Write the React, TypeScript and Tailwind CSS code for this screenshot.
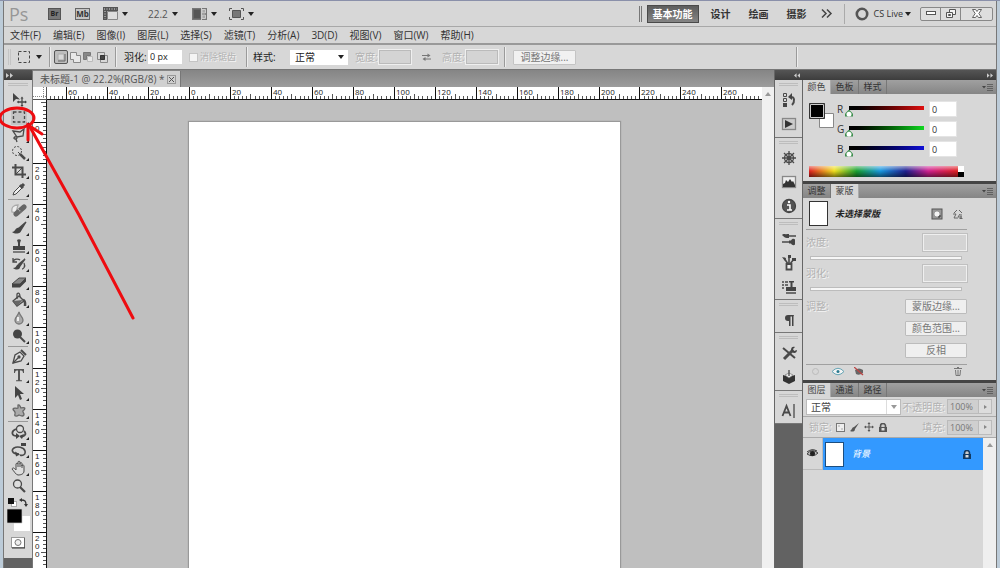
import { useEffect, useRef, useState } from "react";
import type { ReactNode, RefObject } from "react";

const FONT = "font-['Open_Sans','Noto_Sans_CJK_SC',sans-serif]";
const EMBOSS = "text-[#b2b2b2] [text-shadow:1px_1px_0_#f4f4f4]";

function Caret({ color = "#222" }: { color?: string }) {
  return (
    <svg width="6" height="4" viewBox="0 0 6 4" className="shrink-0">
      <path d="M0 0h6L3 4z" fill={color} />
    </svg>
  );
}

function Sep() {
  return <span className="box-content block h-5 w-px shrink-0 border-r border-[#ededed] bg-[#9a9a9a]" />;
}

function Icon({ children, size = 16 }: { children: ReactNode; size?: number }) {
  return (
    <svg width={size} height={size} viewBox="0 0 16 16" fill="none" stroke="#4a4a4a" strokeWidth="1.3" className="shrink-0">
      {children}
    </svg>
  );
}

/* ---------- application bar ---------- */

function AppBar() {
  return (
    <header className="flex h-[26px] shrink-0 items-center border-b border-[#a8a8a8] bg-[#d7d7d7] pl-[5px] pr-[3px] text-[10px]">
      <span className="w-[39px] text-[18px] leading-6 text-[#969696] font-['Open_Sans',sans-serif]">Ps</span>
      <button aria-label="Bridge" className="flex h-3 w-[13px] items-center justify-center border border-[#555] bg-[#777] text-[7px] leading-none font-bold text-[#222]">Br</button>
      <button aria-label="Mini Bridge" className="ml-[14px] flex h-3 w-[15px] items-center justify-center border border-[#666] bg-[#c4c4c4] text-[8px] leading-none font-bold text-[#333]">Mb</button>
      <button aria-label="查看额外内容" className="ml-[13px] flex items-center gap-1">
        <svg width="15" height="13" viewBox="0 0 15 13">
          <path d="M0 0h15v4H4v9H0z" fill="#555" />
          <path d="M4.500 4.500h10v8h-10z" fill="#dedede" stroke="#888" />
          <path d="M1 2h13M2 4v8" stroke="#ddd" strokeDasharray="1 1.500" />
        </svg>
        <Caret />
      </button>
      <button className="ml-5 flex w-[30px] items-center justify-between text-[10px] text-[#555]">22.2<Caret /></button>
      <button aria-label="排列文档" className="ml-[14px] flex items-center gap-1">
        <svg width="15" height="12" viewBox="0 0 15 12">
          <path d="M0 0h15v12H0z" fill="#777" />
          <path d="M1.500 1.500h7v9h-7z" fill="#555" stroke="#666" />
          <path d="M10 1.500h3.500v3.500H10zM10 7h3.500v3.500H10z" fill="#aaa" stroke="#ccc" />
          <path d="M9.500 0v12" stroke="#ccc" />
        </svg>
        <Caret />
      </button>
      <button aria-label="屏幕模式" className="ml-3 flex items-center gap-1">
        <svg width="15" height="12" viewBox="0 0 15 12" stroke="#555" fill="none">
          <path d="M.5 3V.5H3M12 .5h2.500V3M14.500 9v2.500H12M3 11.500H.500V9" />
          <path d="M3.500 2.500h8v7h-8z" fill="#777" />
        </svg>
        <Caret />
      </button>
      <div className="ml-auto flex items-center text-[#333]">
        <span className="h-4 w-[3px] border-x border-[#777]" />
        <button className="ml-[5px] h-[18px] w-[52px] border border-[#4a4a4a] bg-linear-to-b from-[#5d5d5d] to-[#848484] text-[10px] leading-4 font-bold text-white">基本功能</button>
        <button className="ml-3 font-bold">设计</button>
        <button className="ml-[18px] font-bold">绘画</button>
        <button className="ml-[18px] font-bold">摄影</button>
        <button aria-label="更多工作区" className="ml-[14px]">
          <svg width="12" height="9" viewBox="0 0 12 9" fill="none" stroke="#444" strokeWidth="1.500"><path d="M1 .5l4 4-4 4M6 .5l4 4-4 4" /></svg>
        </button>
        <span className="mr-[10px] ml-[11px] h-5 w-px bg-[#aaa]" />
        <button className="flex items-center text-[9px]">
          <svg width="14" height="14" viewBox="0 0 14 14" className="mr-[5px]"><circle cx="7" cy="7" r="5.200" fill="#d7d7d7" stroke="#555" strokeWidth="2.600" /></svg>
          <span className="mr-[2px]">CS Live</span><Caret />
        </button>
        <div className="ml-[9px] flex h-[14px] w-[73px] rounded-[2px] border border-[#888] bg-[#dedede]">
          <button aria-label="最小化" className="flex w-5 items-center justify-center border-r border-[#888]">
            <svg width="10" height="5" viewBox="0 0 10 5"><rect x=".5" y=".5" width="9" height="3" fill="#fff" stroke="#555" /></svg>
          </button>
          <button aria-label="还原" className="flex w-5 items-center justify-center border-r border-[#888]">
            <svg width="10" height="9" viewBox="0 0 10 9" fill="#f3f3f3" stroke="#555"><path d="M3.500.5h6v5h-6z" /><path d="M.5 3.500h6v5h-6z" /><path d="M2.500 5.500h2v1h-2z" /></svg>
          </button>
          <button aria-label="关闭" className="flex flex-1 items-center justify-center">
            <svg width="10" height="9" viewBox="0 0 10 9" fill="#fff" stroke="#555" strokeWidth=".9"><path d="M.5.5h3L5 2.500 6.500.5h3L6.800 4.500l2.700 4h-3L5 6.500 3.500 8.500h-3l2.700-4z" /></svg>
          </button>
        </div>
      </div>
    </header>
  );
}

const MENUS = ["文件(F)", "编辑(E)", "图像(I)", "图层(L)", "选择(S)", "滤镜(T)", "分析(A)", "3D(D)", "视图(V)", "窗口(W)", "帮助(H)"];

function MenuBar() {
  return (
    <nav className="flex h-[18px] shrink-0 items-center gap-[12px] border-b-2 border-[#999] bg-[#d7d7d7] pl-[6px] text-[10px] text-[#333]">
      {MENUS.map((m) => <button key={m} className="whitespace-nowrap">{m}</button>)}
    </nav>
  );
}

/* ---------- options bar ---------- */

function OptionsBar() {
  return (
    <section className="flex h-6 shrink-0 items-center bg-[#d7d7d7] pl-1 text-[10px] text-[#222]">
      <span className="h-4 w-[3px] border-x border-[#c4c4c4]" />
      <button aria-label="矩形选框工具" className="ml-[7px] flex w-6 items-center justify-between">
        <svg width="12" height="12" viewBox="0 0 12 12"><rect x=".5" y=".5" width="11" height="11" fill="none" stroke="#444" strokeDasharray="3 2" /></svg>
        <Caret />
      </button>
      <span className="ml-[7px]"><Sep /></span>
      <span className="flex h-5 items-center pl-[3px]">
        <button aria-label="新选区" className="flex size-[14px] items-center justify-center rounded-[2px] border border-[#555] bg-[#bdbdbd]">
          <svg width="9" height="9" viewBox="0 0 9 9"><path d="M1 1h6v6H1z" fill="#d8d8d8" stroke="#aaa" /><path d="M8 1v7H1" stroke="#666" fill="none" /></svg>
        </button>
        <button aria-label="添加到选区" className="ml-[2px]">
          <svg width="11" height="11" viewBox="0 0 11 11" stroke="#888"><path d="M.5.500h6v3h4v7h-7v-3h-3z" fill="#e8e8e8" /></svg>
        </button>
        <button aria-label="从选区减去" className="ml-[2px]">
          <svg width="11" height="11" viewBox="0 0 11 11"><path d="M.5.5h7v3h-4v4h-3z" fill="#888" stroke="#777" /><path d="M4.500 4.500h5v5h-5z" fill="#e8e8e8" stroke="#bbb" /></svg>
        </button>
        <button aria-label="与选区交叉" className="ml-[3px]">
          <svg width="11" height="11" viewBox="0 0 11 11" fill="none" stroke="#888"><path d="M.5.5h7v7h-7zM3.500 3.500h7v7h-7z" /><path d="M3.500 3.500h4v4h-4z" fill="#444" stroke="#333" /></svg>
        </button>
      </span>
      <span className="mx-[7px]"><Sep /></span>
      <label htmlFor="feather" className="w-6">羽化:</label>
      <input id="feather" defaultValue="0 px" className="h-[14px] w-[34px] bg-white px-[2px] text-[9px]" />
      <label className={`ml-[7px] flex items-center ${EMBOSS}`}>
        <input type="checkbox" className="mr-[2px] size-[9px] appearance-none border border-[#c4c4c4] bg-[#f4f4f4]" />
        <span className="w-[38px] text-[9px]">消除锯齿</span>
      </label>
      <span className="ml-[8px] mr-[5px]"><Sep /></span>
      <label htmlFor="style" className="w-[37px]">样式:</label>
      <span className="flex h-[15px] w-[58px] items-center bg-white pr-1">
        <select id="style" className="w-full appearance-none bg-transparent pl-[5px] text-[10px] leading-[14px]"><option>正常</option></select>
        <Caret />
      </span>
      <label htmlFor="w" className={`ml-[7px] w-6 ${EMBOSS}`}>宽度:</label>
      <input id="w" disabled className="h-[14px] w-8 border border-[#bbb] bg-[#d4d4d4] outline outline-[#efefef]" />
      <button aria-label="交换宽高" className="ml-[11px]">
        <svg width="9" height="8" viewBox="0 0 9 8" stroke="#777" fill="#777"><path d="M0 2.500h6M3 6h6" /><path d="M5.500.500l3 2-3 2zM3.500 4l-3 2 3 2z" stroke="none" /></svg>
      </button>
      <label htmlFor="h" className={`ml-[11px] w-6 ${EMBOSS}`}>高度:</label>
      <input id="h" disabled className="h-[14px] w-8 border border-[#bbb] bg-[#d4d4d4] outline outline-[#efefef]" />
      <span className="ml-[6px] mr-[7px]"><Sep /></span>
      <button className="h-[15px] w-[63px] rounded-[1px] border border-[#c4c4c4] bg-[#f1f1f1] text-[10px] leading-[13px] text-[#777]">调整边缘...</button>
      <span className="ml-auto mr-[198px]"><Sep /></span>
    </section>
  );
}

/* ---------- toolbox ---------- */

const TOOLS: { name: string; art: ReactNode; flyout?: boolean }[][] = [
  [
    { name: "移动", art: <><path d="M2 2v9l3-3 4 .5z" fill="#444" stroke="none" /><path d="M11 7v8M7 11h8" /><path d="M11 5.500l-1.500 2h3zM11 16l-1.500-2h3zM5.700 11l2-1.500v3zM16 11l-2-1.500v3z" fill="#444" stroke="none" /></> },
    { name: "矩形选框", flyout: true, art: <><rect x="0" y="0" width="16" height="16" fill="#c4c4c4" stroke="none" /><rect x="2.500" y="3" width="11" height="10" strokeDasharray="3 2" /></> },
    { name: "套索", flyout: true, art: <path d="M2 4l7 1 4-3-1 7-6 1-4-6zM6 10c-3-1-4 2-2 2s3-1 1-3M5 12l1 3" /> },
    { name: "快速选择", flyout: true, art: <><circle cx="6" cy="6" r="4.500" strokeDasharray="2 1.500" strokeWidth="1" /><path d="M7 7l2 2" strokeWidth="1" /><path d="M9 9l5 5" strokeWidth="2.500" /></> },
    { name: "裁剪", flyout: true, art: <><path d="M4.500 1v10.500H15M1 4.500h10.500V15" strokeWidth="2" /><path d="M5 11l7-7" strokeWidth="1" /></> },
    { name: "吸管", flyout: true, art: <><path d="M2 14l1-3 6-6 2 2-6 6z" fill="#eee" strokeWidth="1" /><path d="M9 4l3 3M10.500 5.500l2.500-2.500" strokeWidth="3" /></> },
  ],
  [
    { name: "修复画笔", flyout: true, art: <><path d="M1 10c-1-5 2-7 6-7l-2 8z" fill="#eee" stroke="#aaa" /><path d="M5 12l8-7" strokeWidth="5" stroke="#666" strokeLinecap="round" /><path d="M7 7l3 3" stroke="#bbb" strokeDasharray="1 1" /></> },
    { name: "画笔", flyout: true, art: <><path d="M15 2L8 8l2 2z" fill="#444" /><path d="M8 8C4 7 5 12 1 12c4 3 10 1 9-2z" fill="#444" stroke="none" /></> },
    { name: "仿制图章", flyout: true, art: <><path d="M6 2q2-1.500 4 0l-1 3v3h5v4H2V8h5V5z" fill="#444" stroke="none" /><path d="M2 14h12" /></> },
    { name: "历史记录画笔", flyout: true, art: <><path d="M14 3L8 8l1 2z" fill="#444" /><path d="M8 8c-3 0-2 4-6 4 4 3 8 1 7-2z" fill="#444" stroke="none" /><path d="M2 6c1-4 6-3 7-2M2 2v4h4" /><path d="M13 7c2 4-1 6-2 6" /></> },
    { name: "橡皮擦", flyout: true, art: <><path d="M1 10l7-6h7l-6 6z" fill="#888" strokeWidth="1" /><path d="M1 10h8v3.500H1zM9 13.500l6-6V4l-6 6z" fill="#444" stroke="none" /></> },
    { name: "油漆桶", flyout: true, art: <><path d="M2 9l6-5 5 5-7 5z" fill="#ccc" /><path d="M2 9l10-1-6 6z" fill="#666" stroke="none" /><path d="M6 7V2c2-2 3 0 3 3" /><path d="M12 8c3 1 2 5 2 6" strokeWidth="2.500" /></> },
    { name: "模糊", flyout: true, art: <><path d="M8 2c1 4 4 5 4 8a4 4 0 01-8 0c0-3 3-4 4-8z" fill="#aaa" stroke="#777" /><path d="M7 7v4" stroke="#eee" strokeWidth="2" /></> },
    { name: "减淡", flyout: true, art: <><circle cx="6.500" cy="6" r="4.500" fill="#444" stroke="none" /><path d="M9 9l5 5" strokeWidth="2" /></> },
  ],
  [
    { name: "钢笔", flyout: true, art: <><path d="M2 14l2-8 5-3 4 4-3 5z" fill="#ddd" /><path d="M2 14l5-5" /><circle cx="8" cy="8" r="1" fill="#444" /><path d="M10 1l5 5" strokeWidth="2" /></> },
    { name: "横排文字", flyout: true, art: <path d="M3 2h10v4h-1c0-2-1-2.500-3-2.500v9c0 .7 1 .8 2 .8v1H5v-1c1 0 2-.1 2-.8v-9C5 3.500 4 4 4 6H3z" fill="#555" stroke="none" /> },
    { name: "路径选择", flyout: true, art: <path d="M4 1v12l3-3 2 5 2-1-2-5h4z" fill="#444" stroke="none" /> },
    { name: "自定形状", flyout: true, art: <path d="M7 2c2-1 2 2 3 3 3-1 5 0 3 2-2 1-1 2 0 4 0 3-3 2-5 1-3 2-5 1-4-1 1-3-2-3-2-5 1-2 4 0 5-1z" fill="#aaa" stroke="#666" /> },
  ],
  [
    { name: "3D 旋转", flyout: true, art: <><circle cx="9" cy="5" r="3.500" fill="#ddd" /><path d="M5 5C0 7 0 12 6 12M13 7c3 3 1 5-3 6" strokeWidth="1.800" /><path d="M5 9l4 3-4 3zM13 10l-5 2 3 3z" fill="#444" stroke="none" /></> },
    { name: "3D 相机", flyout: true, art: <><path d="M8 12C1 12 0 8 3 6s10-1 11 3-3 5-5 4" strokeWidth="1.600" /><path d="M4 9.500l5 3-4 2zM10 1h5v3h-5z" fill="#444" stroke="none" /></> },
    { name: "抓手", flyout: true, art: <path d="M5 9V4c0-1 2-1 2 0V2c0-1 2-1 2 0v2c0-2 2-2 2 0v2c0-2 2-1 2 0v5c0 3-3 4-6 4-2 0-4-4-6-6 1-2 2-1 4 1zM7 4v3M9 4v3M11 5v3" fill="#ddd" strokeWidth="1" /> },
    { name: "缩放", art: <><circle cx="6.500" cy="6" r="4" fill="#ddd" /><path d="M9 9l5 5" strokeWidth="2.200" /></> },
  ],
];

function Toolbox() {
  return (
    <aside className="flex w-7 shrink-0 flex-col bg-[#626262]">
      <div className="flex h-[10px] items-center bg-linear-to-b from-[#555] to-[#3d3d3d] pl-[2px]">
        <svg width="7" height="5" viewBox="0 0 7 5" fill="#ccc"><path d="M0 0l3 2.500L0 5zM4 0l3 2.500L4 5z" /></svg>
      </div>
      <div className="flex h-[478px] flex-col bg-[#d7d7d7] px-1">
        <div className="mt-[3px] mb-1 h-[3px] border-y border-[#bdbdbd]" />
        {TOOLS.map((group, i) => (
          <div key={i} className={i ? "mt-px border-t border-[#999] pt-px" : ""}>
            {group.map((t) => (
              <button key={t.name} aria-label={t.name} className="flex h-[18px] w-full items-center justify-center pl-[3px]">
                <Icon>{t.art}</Icon>
                <svg width="3" height="3" viewBox="0 0 3 3" className="-ml-px mt-3 shrink-0">{t.flyout && <path d="M3 0v3H0z" fill="#222" />}</svg>
              </button>
            ))}
          </div>
        ))}
        <div className="mt-[3px] flex justify-between">
          <button aria-label="默认颜色"><svg width="9" height="9" viewBox="0 0 9 9"><path d="M3 3h6v6H3z" fill="#aaa" /><path d="M4 4h4v4H4z" fill="#fff" /><path d="M0 0h6v6H0z" fill="#111" /></svg></button>
          <button aria-label="切换颜色"><svg width="9" height="9" viewBox="0 0 9 9"><path d="M2 2c4 0 5 1 5 5" fill="none" stroke="#333" strokeWidth="1.300" /><path d="M0 2l3-2v4zM5 6h4L7 9z" fill="#333" /></svg></button>
        </div>
        <svg width="23" height="24" viewBox="0 0 23 24" className="mt-px -ml-px">
          <path d="M7 8h16v15H7z" fill="#fff" /><path d="M0 1h15v14H0z" fill="#000" stroke="#c4c4c4" strokeWidth=".7" />
        </svg>
        <button aria-label="快速蒙版" className="mt-[5px] self-center">
          <svg width="14" height="12" viewBox="0 0 14 12"><rect x=".5" y=".5" width="13" height="10" fill="#fff" stroke="#999" /><path d="M1 11h13V1" stroke="#333" fill="none" /><circle cx="7" cy="5.500" r="3" fill="#eee" stroke="#777" /></svg>
        </button>
      </div>
    </aside>
  );
}

/* ---------- document window ---------- */

const STEP = 4.095;
const range = (a: number, b: number) => Array.from({ length: Math.max(0, b - a + 1) }, (_, i) => a + i);

function useBox(ref: RefObject<SVGSVGElement | null>) {
  const [box, setBox] = useState({ width: 0, height: 0 });
  useEffect(() => {
    const el = ref.current;
    if (!el) return;
    const measure = () => {
      const r = el.getBoundingClientRect();
      setBox({ width: r.width, height: r.height });
    };
    measure();
    const observer = new ResizeObserver(measure);
    observer.observe(el);
    return () => observer.disconnect();
  }, [ref]);
  return box;
}

function HorizontalRuler() {
  const ref = useRef<SVGSVGElement>(null);
  const { width } = useBox(ref);
  return (
    <svg ref={ref} height="13" className="min-w-0 flex-1 bg-white" fontSize="8">
      {range(-34, Math.floor((width - 143) / STEP)).map((n) => {
        const x = Math.round(142 + n * STEP) + 0.5;
        const len = n % 10 === 0 ? 13 : n % 5 === 0 ? 5 : 3;
        return <path key={n} d={`M${x} ${12 - len}V12`} stroke={len === 13 ? "#111" : "#555"} />;
      })}
      {range(-3, Math.floor((width - 160) / (STEP * 10))).map((n) => (
        <text key={n} x={Math.round(142 + n * 10 * STEP) + 2} y="8" fill="#222">{Math.abs(n * 20)}</text>
      ))}
      <path d="M0 12.500H5000" stroke="#111" />
    </svg>
  );
}

function VerticalRuler() {
  const ref = useRef<SVGSVGElement>(null);
  const { height } = useBox(ref);
  return (
    <svg ref={ref} width="14" className="h-full shrink-0 bg-white font-['Liberation_Sans',sans-serif]" fontSize="8">
      {range(-5, Math.floor((height - 22) / STEP)).map((n) => {
        const y = Math.round(22 + n * STEP) + 0.5;
        const len = n % 10 === 0 ? 14 : n % 5 === 0 ? 5 : 3;
        return <path key={n} d={`M${13 - len} ${y}H13`} stroke={len === 14 ? "#111" : "#555"} />;
      })}
      {range(0, Math.floor((height - 52) / (STEP * 10))).map((n) =>
        String(n * 20).split("").map((c, i) => (
          <text key={`${n}-${i}`} x="2" y={Math.round(22 + n * 10 * STEP) + 9 + i * 8} fill="#222">{c}</text>
        )),
      )}
      <path d="M13.500 0V5000" stroke="#111" />
    </svg>
  );
}

function DocumentWindow() {
  return (
    <main className="flex min-w-0 flex-1 flex-col">
      <div className="flex h-[17px] shrink-0 items-end bg-linear-to-b from-[#858585] to-[#9c9c9c]">
        <div className="flex h-4 items-center gap-[3px] border-r border-[#777] bg-[#d0d0d0] pl-[7px] pr-1 text-[10px] text-[#555]">
          <span className="whitespace-nowrap">未标题-1 @ 22.2%(RGB/8) *</span>
          <button aria-label="关闭文档" className="flex size-[9px] items-center justify-center border border-[#999]">
            <svg width="5" height="5" viewBox="0 0 5 5" stroke="#555"><path d="M0 0l5 5M5 0L0 5" /></svg>
          </button>
        </div>
      </div>
      <div className="flex min-h-0 flex-1">
        <div className="flex min-w-0 flex-1 flex-col">
          <div className="flex h-[13px] shrink-0">
            <svg width="14" height="13" className="shrink-0 bg-white"><path d="M10.500 0v13M0 9.500h14" stroke="#888" strokeDasharray="1 1" /><path d="M13.500 0v13M0 12.500h14" stroke="#555" /></svg>
            <HorizontalRuler />
          </div>
          <div className="flex min-h-0 flex-1">
            <VerticalRuler />
            <div className="flex min-w-0 flex-1 overflow-hidden bg-[#bfbfbf] pl-[142px] pt-[22px]">
              <div className="w-[431px] shrink-0 bg-white shadow-[0_0_1px_1px_#999]" />
            </div>
          </div>
        </div>
        <div className="flex w-3 shrink-0 justify-center bg-[#f0f0f0] pt-[5px]">
          <svg width="6" height="4" viewBox="0 0 6 4"><path d="M0 4h6L3 0z" fill="#999" /></svg>
        </div>
      </div>
    </main>
  );
}

/* ---------- collapsed dock ---------- */

const DOCK: { name: string; art: ReactNode }[][] = [
  [
    { name: "历史记录", art: <><path d="M2.500 1.500h3v3h-3zM2.500 6.500h3v3h-3z" strokeWidth="1" /><path d="M2 11h4v4H2z" fill="#444" stroke="none" /><path d="M9 5c5-1 5 5 2 8" strokeWidth="2" /><path d="M7 5l4-4v7z" fill="#444" stroke="none" /></> },
    { name: "动作", art: <><rect x="1.500" y="2.500" width="13" height="11" fill="#ccc" stroke="#888" /><path d="M4 4v8l8-4z" fill="#333" stroke="none" /></> },
  ],
  [
    { name: "导航器", art: <><circle cx="8" cy="8" r="4.500" /><circle cx="8" cy="8" r="1.500" fill="#444" /><path d="M8 1v14M1 8h14M3 3l10 10M13 3L3 13" /></> },
    { name: "直方图", art: <><rect x="1.500" y="2.500" width="13" height="11" fill="#eee" stroke="#888" /><path d="M2 13v-3l2-1 1-3 2 2 2-3 2 3 1-1 2 4v2z" fill="#333" stroke="none" /></> },
    { name: "信息", art: <><circle cx="8" cy="8" r="6.500" fill="#555" stroke="#444" /><path d="M6 7h3v5M6 12h5" stroke="#fff" strokeWidth="1.600" /><circle cx="8" cy="4" r="1.200" fill="#fff" stroke="none" /></> },
  ],
  [
    { name: "画笔预设", art: <><path d="M8 5h7M1 11h7" strokeWidth="1.500" /><path d="M1 4c2-2 3 0 5-1h2v4H6c-2 0-3-1-5-3zM8 9.500h2c1-2 3-2 4-1v5c-1 1-3 1-4-1H8z" fill="#444" stroke="none" /></> },
    { name: "画笔", art: <><path d="M5.500 9h5v5.500h-5z" fill="#eee" strokeWidth="1.800" /><path d="M7 9L3 3M8 9V1M9 9l4-5" strokeWidth="1.600" /><path d="M1 2l4 1-1 3zM11 3h4v3h-4zM7 0h3v3H7z" fill="#444" stroke="none" /></> },
    { name: "仿制源", art: <><path d="M8 2h5v1.500h-1.500V8H15v4H5V8h4.500V3.500H8z" fill="#444" stroke="none" /><path d="M5 14h10M1 3h2M4 3h3M1 6h2M4 6h3M1 9h2" /></> },
  ],
  [{ name: "段落", art: <path d="M13 3H7a3 3 0 000 6h1v5h1.500V4.500H11V14h1.500V4.500z" fill="#444" stroke="none" /> }],
  [
    { name: "工具预设", art: <><path d="M2 3l12 10" strokeWidth="2" /><path d="M3 14l9-9" strokeWidth="3" /><path d="M10 5c0-3 2-4 4-3l-2 2 1 2 3-1c0 3-3 4-5 2" fill="#444" stroke="none" /></> },
    { name: "3D", art: <><path d="M2 6l6 2 6-2v6l-6 3-6-3z" fill="#333" stroke="none" /><path d="M4 6l4-2 4 2-4 3z" fill="#eee" stroke="#777" strokeWidth=".7" /><path d="M8 1v6" /></> },
  ],
  [{ name: "字符", art: <><path d="M1.500 13L5.500 3l4 10M3 9.500h5" strokeWidth="1.800" /><path d="M13 1v14" /></> }],
];

function IconDock() {
  return (
    <aside className="flex w-[27px] shrink-0 flex-col bg-[#626262]">
      {DOCK.map((g, i) => (
        <div key={i} className={`border-b border-[#777] bg-[#d7d7d7] ${g.length === 2 ? "pb-px" : ""}`}>
          <div className="mx-1 mt-[3px] mb-[2px] h-[3px] border-y border-[#bdbdbd]" />
          {g.map((t) => (
            <button key={t.name} aria-label={t.name} className="flex h-6 w-full items-center justify-center"><Icon>{t.art}</Icon></button>
          ))}
        </div>
      ))}
    </aside>
  );
}

/* ---------- panels ---------- */

function Tabs({ names, active }: { names: string[]; active: number }) {
  return (
    <div className="flex h-[14px] shrink-0 bg-linear-to-b from-[#a0a0a0] to-[#858585] text-[9px]">
      {names.map((n, i) => (
        <button key={n} className={`w-7 border-r leading-[14px] ${i === active ? "border-[#aaa] bg-[#d7d7d7] text-[#444]" : "border-[#777] text-[#333]"}`}>{n}</button>
      ))}
      <button aria-label="面板菜单" className="mr-[3px] ml-auto">
        <svg width="11" height="7" viewBox="0 0 11 7"><path d="M0 2h4L2 4.500z" fill="#444" /><path d="M5 .500h6M5 2.500h6M5 4.500h6M5 6.500h6" stroke="#555" strokeWidth=".8" /></svg>
      </button>
    </div>
  );
}

const CHANNELS = [
  { k: "R", bar: "bg-linear-to-r from-black to-[#e01010]" },
  { k: "G", bar: "bg-linear-to-r from-black to-[#10d820]" },
  { k: "B", bar: "bg-linear-to-r from-black to-[#1010d8]" },
];

function ColorPanel() {
  return (
    <section className="flex h-[104px] shrink-0 flex-col border-b-3 border-[#444]">
      <Tabs names={["颜色", "色板", "样式"]} active={0} />
      <div className="flex pt-[7px] pl-[6px]">
        <svg width="26" height="28" viewBox="0 0 26 28" className="mt-[2px]">
          <path d="M10.500 10.500h14v14h-14z" fill="#fff" stroke="#888" />
          <path d="M.5.500h15v15H.5z" fill="#000" stroke="#333" /><path d="M1.500 1.500h13v13h-13z" fill="none" stroke="#ccc" />
        </svg>
        <div className="ml-[2px] flex flex-col gap-1">
          {CHANNELS.map((c) => (
            <div key={c.k} className="flex h-4 items-center text-[10px] text-[#333]">
              <label htmlFor={c.k} className="w-2">{c.k}</label>
              <div className="flex w-[83px] flex-col pt-[4px]">
                <span className={`mx-1 h-1 ${c.bar}`} />
                <input id={c.k} type="range" min="0" max="255" defaultValue="0" className="h-[7px] w-full appearance-none bg-transparent [&::-webkit-slider-thumb]:h-[7px] [&::-webkit-slider-thumb]:w-2 [&::-webkit-slider-thumb]:appearance-none [&::-webkit-slider-thumb]:bg-[radial-gradient(circle_at_50%_60%,#fff_0_2px,#3f8f4f_3px)] [&::-webkit-slider-thumb]:[clip-path:polygon(50%_0,100%_60%,100%_100%,0_100%,0_60%)]" />
              </div>
              <input aria-label={`${c.k} 值`} defaultValue="0" className="ml-px h-4 w-7 border border-[#e4e4e4] bg-white px-[2px] text-[9px] leading-3" />
            </div>
          ))}
        </div>
      </div>
      <div className="mt-[9px] ml-[6px] flex h-[11px] w-[155px]">
        <div className="flex-1 bg-[linear-gradient(to_bottom,rgba(255,255,255,.55),transparent_45%,rgba(0,0,0,.5)),linear-gradient(to_right,#e02020,#f0e020_17%,#18a030_32%,#1898e0_48%,#202090_65%,#d02090_80%,#e02020)]" />
        <div className="w-[6px] bg-linear-to-b from-white from-50% to-black to-50%" />
      </div>
    </section>
  );
}

function MaskField({ id, label }: { id: string; label: string }) {
  return (
    <div className="h-[31px] pt-[3px]">
      <div className="flex h-[18px] items-center justify-between">
        <label htmlFor={id} className={EMBOSS}>{label}</label>
        <input id={id} disabled className="h-[17px] w-11 border border-[#efefef] bg-[#d4d4d4] outline outline-[#c0c0c0]" />
      </div>
      <input type="range" disabled aria-label={`${label}滑块`} defaultValue="0" className="mx-1 mt-[5px] block h-1 w-[152px] appearance-none border border-[#bcbcbc] bg-[#f6f6f6] [&::-webkit-slider-thumb]:appearance-none" />
    </div>
  );
}

function MaskPanel() {
  return (
    <section className="flex h-[199px] shrink-0 flex-col border-b-3 border-[#444]">
      <Tabs names={["调整", "蒙版"]} active={1} />
      <div className="mr-[29px] ml-[3px] flex flex-1 flex-col text-[10px]">
        <div className="flex h-8 shrink-0 items-center border-b border-[#a0a0a0] pl-[3px]">
          <span className="h-[25px] w-[19px] border border-[#333] bg-white" />
          <span className="ml-[7px] text-[9px] font-bold text-[#222] italic">未选择蒙版</span>
          <button aria-label="添加像素蒙版" className="ml-auto">
            <svg width="12" height="12" viewBox="0 0 12 12"><rect x="1" y="1" width="10" height="10" fill="#999" stroke="#555" /><circle cx="6" cy="6" r="3" fill="#f4f4f4" stroke="#777" strokeWidth=".6" /><path d="M7 9h2V7" stroke="#333" fill="none" /></svg>
          </button>
          <button aria-label="添加矢量蒙版" className="mr-[3px] ml-[9px]">
            <svg width="12" height="12" viewBox="0 0 12 12" fill="none" stroke="#666"><path d="M5 2L2 5M7 2l3 3M1 6h3l-2 4h4M8 6L6 9h4M9 6v5M7.500 10.500h3" /></svg>
          </button>
        </div>
        <MaskField id="density" label="浓度:" />
        <MaskField id="mask-feather" label="羽化:" />
        <div className="flex justify-between pt-[7px]">
          <span className={EMBOSS}>调整:</span>
          <div className="flex flex-col gap-[7px]">
            {["蒙版边缘...", "颜色范围...", "反相"].map((b) => (
              <button key={b} className="h-[15px] w-[62px] rounded-[1px] border border-[#bcbcbc] bg-[#efefef] leading-[13px] text-[#777]">{b}</button>
            ))}
          </div>
        </div>
        <div className="mt-[6px] flex h-3 items-center border-t border-[#a0a0a0] px-[5px] pt-[2px]">
          <svg width="9" height="9" viewBox="0 0 9 9"><circle cx="4.500" cy="4.500" r="3" fill="none" stroke="#bbb" /></svg>
          <svg width="14" height="9" viewBox="0 0 14 9" className="ml-[11px]"><path d="M1 4.500Q7-2 13 4.500 7 11 1 4.500z" fill="#f4f4f4" stroke="#66a5b5" /><circle cx="7" cy="4.500" r="1.500" fill="#2a7a90" /></svg>
          <svg width="10" height="9" viewBox="0 0 10 9" className="ml-[9px]"><path d="M1 3Q5 0 9 3v3Q5 9 2 7z" fill="#666" /><path d="M0 0l9 8" stroke="#b44" strokeWidth="1.300" /></svg>
          <svg width="8" height="9" viewBox="0 0 8 9" className="ml-auto" fill="none" stroke="#777"><path d="M0 1.500h8M1.500 3l.5 5.500h4l.5-5.500M3 .5h2M4 3v5" /></svg>
        </div>
      </div>
    </section>
  );
}

function Percent({ id, label }: { id: string; label: string }) {
  return (
    <div className="ml-auto flex items-center">
      <label htmlFor={id} className={`mr-[2px] whitespace-nowrap ${EMBOSS}`}>{label}</label>
      <input id={id} defaultValue="100%" className="h-[15px] w-8 border border-[#bbb] bg-[#cfcfcf] px-[2px] text-[9px] text-[#777]" />
      <button aria-label={`${label}滑块`} className="flex h-[15px] w-[13px] items-center justify-center border border-l-0 border-[#bbb] bg-[#ddd]">
        <svg width="3" height="4" viewBox="0 0 3 4"><path d="M0 0l3 2-3 2z" fill="#888" /></svg>
      </button>
    </div>
  );
}

function Padlock({ color = "#555" }: { color?: string }) {
  return (
    <svg width="8" height="9" viewBox="0 0 8 9"><path d="M1.500 4V3a2.500 2.500 0 015 0v1" fill="#ccc" stroke={color} strokeWidth="1.600" /><path d="M0 4h8v5H0z" fill={color} /><path d="M2.500 5h3v2.500h-3z" fill="#ddd" /></svg>
  );
}

function LayersPanel() {
  return (
    <section className="flex min-h-0 flex-1 flex-col">
      <Tabs names={["图层", "通道", "路径"]} active={0} />
      <div className="flex h-[20px] shrink-0 items-center border-b border-[#aaa] pr-1 pl-[3px] text-[10px]">
        <span className="flex h-4 w-[95px] shrink-0 items-center border border-[#bbb] bg-white">
          <select aria-label="混合模式" className="w-full appearance-none bg-transparent pl-[4px] leading-[14px] text-[#444]"><option>正常</option></select>
          <span className="flex h-full w-[14px] shrink-0 items-center justify-center border-l border-[#ddd]"><Caret color="#999" /></span>
        </span>
        <Percent id="opacity" label="不透明度:" />
      </div>
      <div className="flex h-[21px] shrink-0 items-center border-b border-[#aaa] pr-1 pl-[6px] text-[10px]">
        <span className={`mr-1 ${EMBOSS}`}>锁定:</span>
        <div className="flex items-center gap-[5px]">
          <svg width="9" height="9" viewBox="0 0 9 9"><rect x=".5" y=".5" width="8" height="8" fill="#eee" stroke="#777" /><path d="M2 2h2v2H2zM5 5h2v2H5z" fill="#ccc" /></svg>
          <svg width="9" height="9" viewBox="0 0 9 9"><path d="M9 0L4 4l1 2zM4 4C2 4 2 7 0 8c2 1 5 1 5-2z" fill="#555" /></svg>
          <svg width="10" height="10" viewBox="0 0 10 10" stroke="#555" fill="#555"><path d="M5 1v8M1 5h8" /><path d="M5 0L3.500 2h3zM5 10L3.500 8h3zM0 5l2-1.500v3zM10 5L8 3.500v3z" stroke="none" /></svg>
          <Padlock />
        </div>
        <Percent id="fill" label="填充:" />
      </div>
      <div className="flex min-h-0 flex-1">
        <div className="flex-1">
          <div className="flex h-8 items-center bg-[#3399ff]">
            <button aria-label="显示图层" className="flex h-full w-5 items-center justify-center border-r border-b border-[#bbb] bg-[#d7d7d7]">
              <svg width="11" height="9" viewBox="0 0 11 9"><path d="M0 5Q5-1 11 4 6 9 0 5z" fill="#bbb" stroke="#444" /><circle cx="5.500" cy="4.500" r="2.500" fill="#222" /><path d="M0 3Q5-1 10 2" stroke="#333" fill="none" /></svg>
            </button>
            <span className="ml-[2px] h-[25px] w-[19px] border border-[#1c4e80] bg-white" />
            <span className="ml-[8px] text-[9px] text-white italic">背景</span>
            <span className="mr-3 ml-auto"><Padlock color="#123a63" /></span>
          </div>
        </div>
        <div className="flex w-[13px] justify-center bg-[#efefef] pt-[5px]">
          <svg width="6" height="4" viewBox="0 0 6 4"><path d="M0 4h6L3 0z" fill="#999" /></svg>
        </div>
      </div>
    </section>
  );
}

function RightDock() {
  return (
    <div className="flex w-[222px] shrink-0 flex-col border-l border-[#666]">
      <div className="flex h-[10px] shrink-0 items-center justify-between bg-linear-to-b from-[#555] to-[#3d3d3d] pr-[3px] pl-[19px]">
        <svg width="6" height="5" viewBox="0 0 7 5" fill="#ccc"><path d="M3 0L0 2.500 3 5zM7 0L4 2.500 7 5z" /></svg>
        <svg width="6" height="5" viewBox="0 0 7 5" fill="#ccc"><path d="M0 0l3 2.500L0 5zM4 0l3 2.500L4 5z" /></svg>
      </div>
      <div className="flex min-h-0 flex-1">
        <IconDock />
        <div className="flex min-w-0 flex-1 flex-col border-l border-[#666] bg-[#d7d7d7]">
          <ColorPanel />
          <MaskPanel />
          <LayersPanel />
        </div>
      </div>
    </div>
  );
}

function Annotation() {
  return (
    <svg width="150" height="340" viewBox="0 0 150 340" className="pointer-events-none absolute top-0 left-0" fill="none" stroke="#ee0c10" strokeWidth="3" strokeLinecap="round">
      <ellipse cx="17" cy="117" rx="17" ry="10" />
      <path d="M133 317L79 214 30 126" />
      <path d="M28 139V124L42 133" />
    </svg>
  );
}

export default function App() {
  return (
    <div className={`relative flex h-screen flex-col overflow-hidden border-t border-t-[#8a90aa] bg-[#bccbd8] px-[3px] leading-[14px] ${FONT}`}>
      <div className="flex min-h-0 flex-1 flex-col border-x border-[#777]">
        <AppBar />
        <MenuBar />
        <OptionsBar />
        <div className="flex min-h-0 flex-1 border-t border-[#777]">
          <Toolbox />
          <div className="w-px shrink-0 bg-[#777]" />
          <DocumentWindow />
          <RightDock />
        </div>
      </div>
      <Annotation />
    </div>
  );
}
